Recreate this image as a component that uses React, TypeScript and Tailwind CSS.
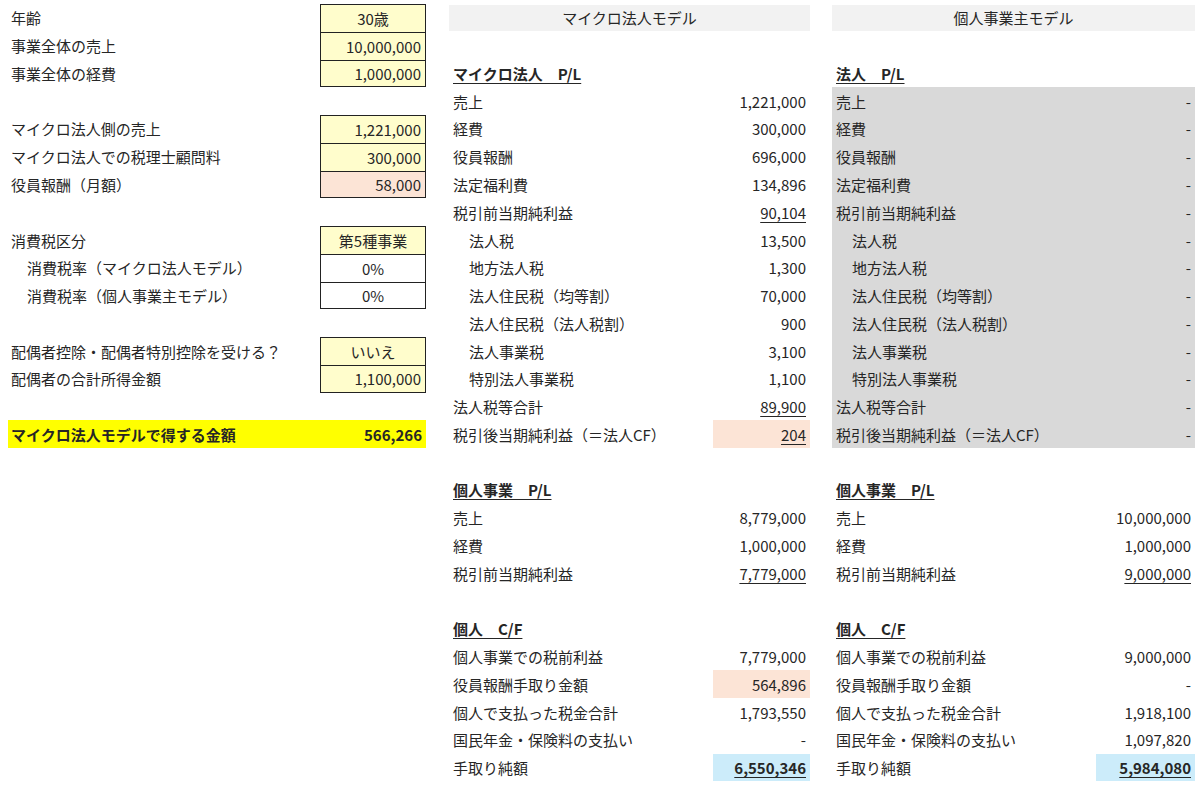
import React from "react";

type Cell = { t?: string; v?: string; kind?: "hdr" | "title" | "row"; indent?: boolean; u?: boolean; bg?: string; bold?: boolean };
type L = { t?: string; v?: string; bg?: string; center?: boolean; indent?: boolean; box?: "top" | "mid" | "bot" | "single"; yellow?: boolean };

const Y = "bg-[#fffdcc]";
const P = "bg-[#fce4d6]";
const B = "bg-[#ccecfa]";

const left: L[] = [
  { t: "年齢", v: "30歳", bg: Y, center: true, box: "top" },
  { t: "事業全体の売上", v: "10,000,000", bg: Y, box: "mid" },
  { t: "事業全体の経費", v: "1,000,000", bg: Y, box: "bot" },
  {},
  { t: "マイクロ法人側の売上", v: "1,221,000", bg: Y, box: "top" },
  { t: "マイクロ法人での税理士顧問料", v: "300,000", bg: Y, box: "mid" },
  { t: "役員報酬（月額）", v: "58,000", bg: P, box: "bot" },
  {},
  { t: "消費税区分", v: "第5種事業", bg: Y, center: true, box: "top" },
  { t: "消費税率（マイクロ法人モデル）", v: "0%", bg: "bg-white", center: true, indent: true, box: "mid" },
  { t: "消費税率（個人事業主モデル）", v: "0%", bg: "bg-white", center: true, indent: true, box: "bot" },
  {},
  { t: "配偶者控除・配偶者特別控除を受ける？", v: "いいえ", bg: Y, center: true, box: "top" },
  { t: "配偶者の合計所得金額", v: "1,100,000", bg: Y, box: "bot" },
  {},
  { yellow: true, t: "マイクロ法人モデルで得する金額", v: "566,266" },
];

const mid: Cell[] = [
  { kind: "hdr", t: "マイクロ法人モデル" },
  {},
  { kind: "title", t: "マイクロ法人\u3000P/L" },
  { t: "売上", v: "1,221,000" },
  { t: "経費", v: "300,000" },
  { t: "役員報酬", v: "696,000" },
  { t: "法定福利費", v: "134,896" },
  { t: "税引前当期純利益", v: "90,104", u: true },
  { t: "法人税", v: "13,500", indent: true },
  { t: "地方法人税", v: "1,300", indent: true },
  { t: "法人住民税（均等割）", v: "70,000", indent: true },
  { t: "法人住民税（法人税割）", v: "900", indent: true },
  { t: "法人事業税", v: "3,100", indent: true },
  { t: "特別法人事業税", v: "1,100", indent: true },
  { t: "法人税等合計", v: "89,900", u: true },
  { t: "税引後当期純利益（＝法人CF）", v: "204", u: true, bg: P },
  {},
  { kind: "title", t: "個人事業\u3000P/L" },
  { t: "売上", v: "8,779,000" },
  { t: "経費", v: "1,000,000" },
  { t: "税引前当期純利益", v: "7,779,000", u: true },
  {},
  { kind: "title", t: "個人\u3000C/F" },
  { t: "個人事業での税前利益", v: "7,779,000" },
  { t: "役員報酬手取り金額", v: "564,896", bg: P },
  { t: "個人で支払った税金合計", v: "1,793,550" },
  { t: "国民年金・保険料の支払い", v: "-" },
  { t: "手取り純額", v: "6,550,346", u: true, bold: true, bg: B },
];

const right: Cell[] = [
  { kind: "hdr", t: "個人事業主モデル" },
  {},
  { kind: "title", t: "法人\u3000P/L" },
  { t: "売上", v: "-" },
  { t: "経費", v: "-" },
  { t: "役員報酬", v: "-" },
  { t: "法定福利費", v: "-" },
  { t: "税引前当期純利益", v: "-" },
  { t: "法人税", v: "-", indent: true },
  { t: "地方法人税", v: "-", indent: true },
  { t: "法人住民税（均等割）", v: "-", indent: true },
  { t: "法人住民税（法人税割）", v: "-", indent: true },
  { t: "法人事業税", v: "-", indent: true },
  { t: "特別法人事業税", v: "-", indent: true },
  { t: "法人税等合計", v: "-" },
  { t: "税引後当期純利益（＝法人CF）", v: "-" },
  {},
  { kind: "title", t: "個人事業\u3000P/L" },
  { t: "売上", v: "10,000,000" },
  { t: "経費", v: "1,000,000" },
  { t: "税引前当期純利益", v: "9,000,000", u: true },
  {},
  { kind: "title", t: "個人\u3000C/F" },
  { t: "個人事業での税前利益", v: "9,000,000" },
  { t: "役員報酬手取り金額", v: "-" },
  { t: "個人で支払った税金合計", v: "1,918,100" },
  { t: "国民年金・保険料の支払い", v: "1,097,820" },
  { t: "手取り純額", v: "5,984,080", u: true, bold: true, bg: B },
];

function LeftCells({ c }: { c: L }) {
  if (c.yellow)
    return (
      <div className="col-span-2 flex items-center justify-between bg-[#ffff00] pl-[3px] pr-[4px] font-bold">
        <span>{c.t}</span>
        <span>{c.v}</span>
      </div>
    );
  const border =
    c.box === "top" ? "border border-b-0" : c.box === "mid" ? "border border-y-0 border-t" : c.box === "bot" ? "border border-t" : "";
  return (
    <>
      <div className={`flex items-center whitespace-nowrap ${c.indent ? "pl-[19px]" : "pl-[3px]"}`}>{c.t}</div>
      <div className={`flex items-center ${c.center ? "justify-center" : "justify-end pr-[4px]"} ${c.v ? `${c.bg} border-[#222] ${border}` : ""}`}>
        {c.v}
      </div>
    </>
  );
}

function Block({ c, gray, valW }: { c: Cell; gray: boolean; valW: string }) {
  if (c.kind === "hdr")
    return <div className="col-span-2 flex items-center justify-center bg-[#f2f2f2] my-[1px]">{c.t}</div>;
  if (c.kind === "title")
    return (
      <div className="col-span-2 flex items-center pl-[4px] font-bold underline underline-offset-[3px]">{c.t}</div>
    );
  if (!c.t) return <div className="col-span-2" />;
  return (
    <>
      <div className={`flex items-center whitespace-nowrap ${c.indent ? "pl-[20px]" : "pl-[4px]"} ${gray ? "bg-[#d9d9d9]" : ""}`}>{c.t}</div>
      <div className={`flex items-center justify-end pr-[4px] ${valW} ${gray ? "bg-[#d9d9d9]" : c.bg ?? ""} ${c.bold ? "font-bold" : ""}`}>
        <span className={c.u ? "underline underline-offset-[3px]" : ""}>{c.v}</span>
      </div>
    </>
  );
}

export default function App() {
  const rows = Array.from({ length: 28 }, (_, i) => i);
  return (
    <div
      className="w-[1200px] h-[791px] bg-white text-[#262626] text-[15px] pt-[4px] overflow-hidden"
      style={{ fontFamily: '"Noto Sans CJK JP", "Noto Sans", sans-serif' }}
    >
      <div className="grid grid-cols-[8px_312px_106px_23px_264px_97px_22px_264px_99px] auto-rows-[27.78px] leading-none">
        {rows.map((i) => (
          <React.Fragment key={i}>
            <div />
            {left[i] ? <LeftCells c={left[i]} /> : <div className="col-span-2" />}
            <div />
            <Block c={mid[i]} gray={false} valW="" />
            <div />
            <Block c={right[i]} gray={i >= 3 && i <= 15} valW="" />
          </React.Fragment>
        ))}
      </div>
    </div>
  );
}
